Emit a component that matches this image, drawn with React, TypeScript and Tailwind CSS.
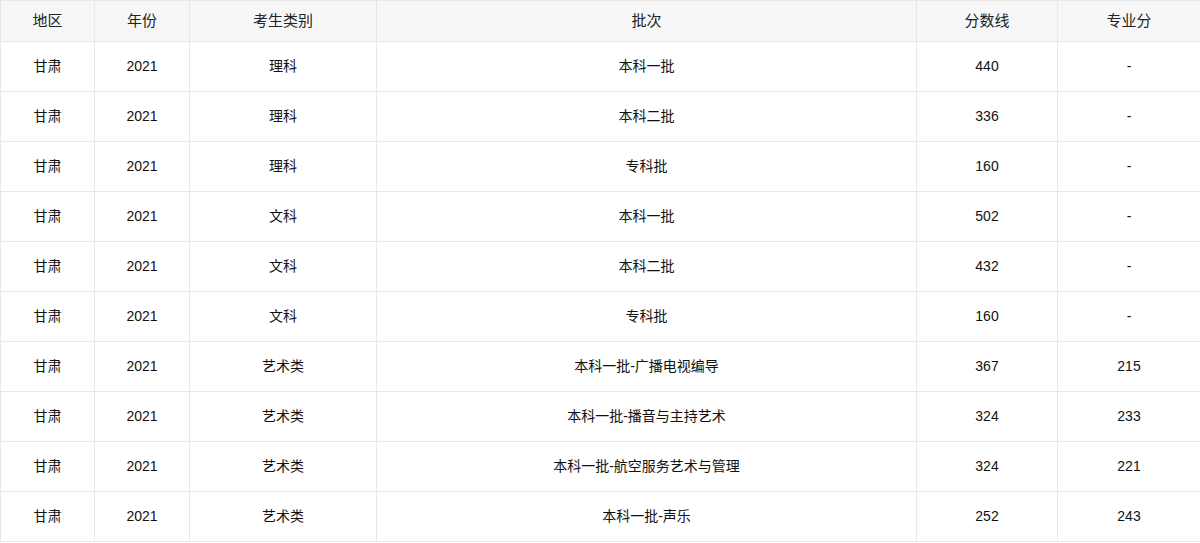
const rows: [string, string, string, string][] = [
  ["理科", "本科一批", "440", "-"],
  ["理科", "本科二批", "336", "-"],
  ["理科", "专科批", "160", "-"],
  ["文科", "本科一批", "502", "-"],
  ["文科", "本科二批", "432", "-"],
  ["文科", "专科批", "160", "-"],
  ["艺术类", "本科一批-广播电视编导", "367", "215"],
  ["艺术类", "本科一批-播音与主持艺术", "324", "233"],
  ["艺术类", "本科一批-航空服务艺术与管理", "324", "221"],
  ["艺术类", "本科一批-声乐", "252", "243"],
];

const headers = ["地区", "年份", "考生类别", "批次", "分数线", "专业分"];

export default function App() {
  return (
    <div className="w-[1200px] bg-white font-['Liberation_Sans','Noto_Sans_CJK_SC',sans-serif]">
      <table className="w-full table-fixed border-collapse text-center">
        <colgroup>
          <col className="w-[94px]" />
          <col className="w-[95px]" />
          <col className="w-[187px]" />
          <col className="w-[540px]" />
          <col className="w-[141px]" />
          <col className="w-[143px]" />
        </colgroup>
        <thead>
          <tr className="h-[41px] bg-[#f7f7f7]">
            {headers.map((h) => (
              <th
                key={h}
                className="border border-[#e8e8e8] p-0 text-[15px] font-normal text-[#222]"
              >
                {h}
              </th>
            ))}
          </tr>
        </thead>
        <tbody>
          {rows.map((r, i) => (
            <tr key={i} className="h-[50px]">
              <td className="border border-[#e8e8e8] p-0 text-[14px] text-[#111]">甘肃</td>
              <td className="border border-[#e8e8e8] p-0 text-[14px] text-[#111]">2021</td>
              <td className="border border-[#e8e8e8] p-0 text-[14px] text-[#111]">{r[0]}</td>
              <td className="border border-[#e8e8e8] p-0 text-[14px] text-[#111]">{r[1]}</td>
              <td className="border border-[#e8e8e8] p-0 text-[14px] text-[#111]">{r[2]}</td>
              <td className="border border-[#e8e8e8] p-0 text-[14px] text-[#111]">{r[3]}</td>
            </tr>
          ))}
        </tbody>
      </table>
    </div>
  );
}
